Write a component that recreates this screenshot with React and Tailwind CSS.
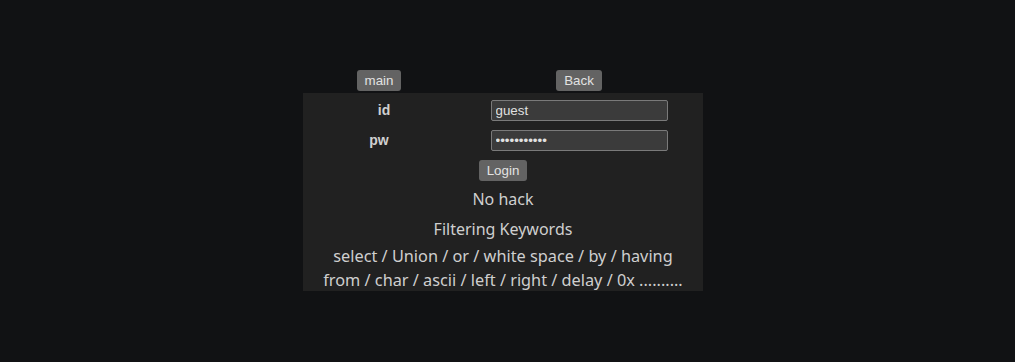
export default function App() {
  const btn = "h-[21px] px-[8px] rounded-[3px] bg-[#636363] text-[#e2e2e2] text-[13.33px] leading-none font-['Liberation_Sans',Arial,sans-serif]";
  const inp = "w-[177px] h-[21px] bg-[#3b3b3b] border border-[#7a7a7a] rounded-[2px] px-[4px] text-[#e0e0e0] text-[13.33px] font-['Liberation_Sans',Arial,sans-serif] outline-none";
  return (
    <div className="min-h-[362px] w-full bg-[#111214] pt-[70px] flex justify-center pr-[9px]">
      <div className="w-[400px] flex flex-col">
        <div className="grid grid-cols-[152px_248px] h-[23px]">
          <div className="flex justify-center">
            <button className={btn}>main</button>
          </div>
          <div className="flex justify-center">
            <button className={btn}>Back</button>
          </div>
        </div>
        <div className="bg-[#212121] flex flex-col items-center">
          <div className="grid grid-cols-[152px_248px] w-full">
            <div className="flex items-center justify-center h-[32px] pt-[2px] pl-[10px] text-[#d0d0d0] font-bold text-[14px] font-['Liberation_Sans',Arial,sans-serif]">id</div>
            <div className="flex items-center justify-center h-[32px] pt-[2px]">
              <input readOnly value="guest" className={inp} />
            </div>
            <div className="flex items-center justify-center h-[30px] text-[#d0d0d0] font-bold text-[14px] font-['Liberation_Sans',Arial,sans-serif]">pw</div>
            <div className="flex items-center justify-center h-[30px]">
              <input readOnly type="password" value="guest123456" className={inp} />
            </div>
          </div>
          <button className={`mt-[5px] ${btn}`}>Login</button>
          <div className="mt-[6px] text-[16px] leading-[24px] text-[#cfcfcf] font-['Noto_Sans',sans-serif]">No hack</div>
          <div className="mt-[6px] text-[16px] leading-[24px] text-[#cfcfcf] font-['Noto_Sans',sans-serif]">Filtering Keywords</div>
          <div className="mt-[3px] mb-[-1px] text-[16.3px] leading-[24px] text-[#cfcfcf] font-['Noto_Sans',sans-serif] text-center">
            select / Union / or / white space / by / having<br />from / char / ascii / left / right / delay / 0x ..........
          </div>
        </div>
      </div>
    </div>
  );
}
